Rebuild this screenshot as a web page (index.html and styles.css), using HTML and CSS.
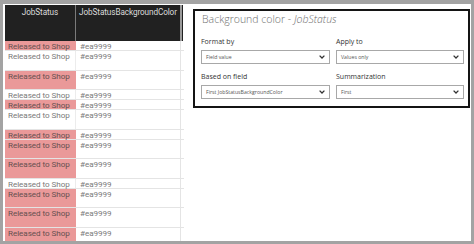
FILE: index.html
```html
<!DOCTYPE html>
<html>
<head>
<meta charset="utf-8">
<link rel="stylesheet" href="styles.css">
</head>
<body>
<div class="frame">
  <div class="table">
    <div class="head">
      <div class="hc c1">JobStatus</div>
      <div class="hc c2">JobStatusBackgroundColor</div>
      <div class="hscroll"></div>
    </div>
    <div class="row s pink"><div class="c1">Released to Shop</div><div class="c2">#ea9999</div></div>
    <div class="row t"><div class="c1">Released to Shop</div><div class="c2">#ea9999</div></div>
    <div class="row t pink"><div class="c1">Released to Shop</div><div class="c2">#ea9999</div></div>
    <div class="row s"><div class="c1">Released to Shop</div><div class="c2">#ea9999</div></div>
    <div class="row s pink"><div class="c1">Released to Shop</div><div class="c2">#ea9999</div></div>
    <div class="row t"><div class="c1">Released to Shop</div><div class="c2">#ea9999</div></div>
    <div class="row s pink"><div class="c1">Released to Shop</div><div class="c2">#ea9999</div></div>
    <div class="row t pink"><div class="c1">Released to Shop</div><div class="c2">#ea9999</div></div>
    <div class="row t pink"><div class="c1">Released to Shop</div><div class="c2">#ea9999</div></div>
    <div class="row s"><div class="c1">Released to Shop</div><div class="c2">#ea9999</div></div>
    <div class="row t pink"><div class="c1">Released to Shop</div><div class="c2">#ea9999</div></div>
    <div class="row t pink"><div class="c1">Released to Shop</div><div class="c2">#ea9999</div></div>
    <div class="row t pink"><div class="c1">Released to Shop</div><div class="c2">#ea9999</div></div>
  </div>
  <div class="panel">
    <div class="title">Background color - <em>JobStatus</em></div>
    <div class="fields">
      <div class="field">
        <div class="label">Format by</div>
        <div class="select"><span>Field value</span><svg class="chev" viewBox="0 0 6 4" width="6" height="4"><polyline points="0.6,0.6 3,3 5.4,0.6" fill="none" stroke="#333" stroke-width="1.3"/></svg></div>
      </div>
      <div class="field">
        <div class="label">Apply to</div>
        <div class="select"><span>Values only</span><svg class="chev" viewBox="0 0 6 4" width="6" height="4"><polyline points="0.6,0.6 3,3 5.4,0.6" fill="none" stroke="#333" stroke-width="1.3"/></svg></div>
      </div>
      <div class="field">
        <div class="label">Based on field</div>
        <div class="select"><span>First JobStatusBackgroundColor</span><svg class="chev" viewBox="0 0 6 4" width="6" height="4"><polyline points="0.6,0.6 3,3 5.4,0.6" fill="none" stroke="#333" stroke-width="1.3"/></svg></div>
      </div>
      <div class="field">
        <div class="label">Summarization</div>
        <div class="select"><span>First</span><svg class="chev" viewBox="0 0 6 4" width="6" height="4"><polyline points="0.6,0.6 3,3 5.4,0.6" fill="none" stroke="#333" stroke-width="1.3"/></svg></div>
      </div>
    </div>
  </div>
</div>
</body>
</html>
```

FILE: styles.css
```css
html, body {
  margin: 0;
  padding: 0;
  background: #ffffff;
}
.frame {
  box-sizing: border-box;
  width: 474px;
  height: 244px;
  border-style: solid;
  border-color: #a3a3a3;
  border-width: 4px 3px 3px 3px;
  background: #ffffff;
  display: flex;
  align-items: flex-start;
  overflow: hidden;
}
.table {
  margin: 1px 0 0 2px;
  width: 179px;
  flex: none;
  font-family: Roboto, "Liberation Sans", sans-serif;
  font-size: 8.1px;
  letter-spacing: -0.05px;
  line-height: 10px;
}
.head {
  display: flex;
  height: 36px;
  background: #212121;
  width: 178px;
}
.hc {
  color: #dcdcdc;
  text-align: center;
  padding-top: 2px;
  font-size: 8.2px;
  letter-spacing: -0.1px;
  white-space: nowrap;
}
.head .c1 {
  width: 70px;
  border-right: 1px solid #7a7a7a;
}
.head .c2 {
  width: 104px;
}
.hscroll {
  width: 2px;
  background: #9a9a9a;
}
.row {
  display: flex;
  box-sizing: border-box;
  border-bottom: 1px solid #e4e4e4;
  width: 179px;
}
.row.s { height: 10px; }
.row.t { height: 19.5px; }
.row .c1 {
  width: 71px;
  box-sizing: border-box;
  padding-left: 3px;
  color: #7a7a7a;
  border-right: 1px solid #ececec;
  white-space: nowrap;
}
.row.pink .c1 {
  background: #ea9999;
  color: #665050;
  border-right-color: #ea9999;
}
.row .c2 {
  width: 105px;
  box-sizing: border-box;
  padding-left: 4px;
  color: #7a7a7a;
  border-right: 1px solid #e4e4e4;
}
.panel {
  box-sizing: border-box;
  margin: 5px 0 0 9px;
  width: 277px;
  height: 99px;
  border: 2px solid #141414;
  padding: 1px 4px 0 6px;
  font-family: "Open Sans", "Noto Sans", sans-serif;
}
.title {
  height: 14px;
  line-height: 14px;
  font-size: 10.5px;
  font-weight: 300;
  color: #6e6e6e;
  padding-left: 1px;
  margin-bottom: 11px;
  white-space: nowrap;
}
.title em {
  font-style: italic;
}
.fields {
  display: grid;
  grid-template-columns: 129px 128px;
  column-gap: 6px;
  row-gap: 8px;
}
.label {
  height: 9px;
  line-height: 9px;
  font-size: 7px;
  color: #333333;
  margin-bottom: 4px;
  white-space: nowrap;
}
.select {
  box-sizing: border-box;
  height: 14px;
  border: 1px solid #a8a8a8;
  display: flex;
  align-items: center;
  justify-content: space-between;
  padding: 0 4px 0 4px;
  font-size: 5.2px;
  color: #555555;
  white-space: nowrap;
}
.chev {
  display: block;
  flex: none;
}
```
